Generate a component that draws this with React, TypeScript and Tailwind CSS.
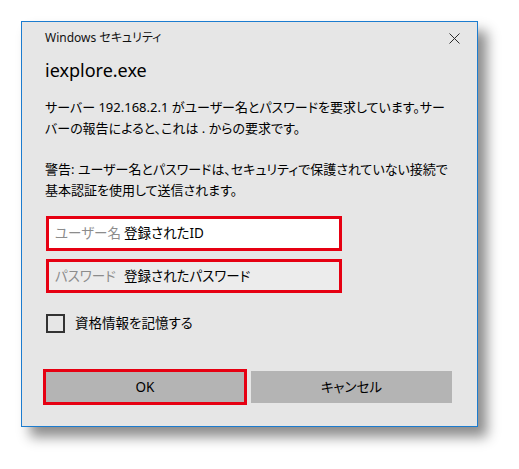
const font = "font-['Noto_Sans','Noto_Sans_CJK_JP',sans-serif] [font-feature-settings:'palt']"

const CloseIcon = () => (
	<svg width="11" height="11" viewBox="0 0 11 11" className="block">
		<path d="M0.5 0.5 L10.5 10.5 M10.5 0.5 L0.5 10.5" stroke="#2b2b2b" strokeWidth="1" fill="none" />
	</svg>
)

export default function App() {
	return (
		<div className={`min-h-[469px] w-[519px] bg-white pt-[21px] pl-[21px] ${font}`}>
			<div className="flex h-[406px] w-[457px] flex-col border border-[#1c7ccf] bg-[#e6e6e6] pl-[23px] text-black shadow-[9px_10px_12px_rgba(0,0,0,0.45)]">
				{/* title bar */}
				<div className="mt-[8px] flex h-[16px] items-center justify-between pr-[17px]">
					<div className="text-[12px] leading-[16px] text-[#111]">Windows セキュリティ</div>
					<CloseIcon />
				</div>

				<div className="mt-[11px] text-[18px] leading-[26px]">iexplore.exe</div>

				<div className="mt-[14px] text-[13px] leading-[21px]">
					サーバー 192.168.2.1 がユーザー名とパスワードを要求しています。サー
					<br />
					バーの報告によると、これは . からの要求です。
				</div>

				<div className="mt-[20px] text-[13px] leading-[21px]">
					警告: ユーザー名とパスワードは、セキュリティで保護されていない接続で
					<br />
					基本認証を使用して送信されます。
				</div>

				{/* credential fields */}
				<div className="mt-[15px] ml-px flex h-[35px] w-[296px] items-center border-[3px] border-[#e60012] bg-white pl-[6px] text-[13.5px]">
					<span className="w-[69px] text-[#8c8c8c]">ユーザー名</span>
					<span>登録されたID</span>
				</div>
				<div className="mt-[8px] ml-px flex h-[34px] w-[296px] items-center border-[3px] border-[#e60012] bg-[#ececec] pl-[6px] text-[13.5px]">
					<span className="w-[69px] text-[#8c8c8c]">パスワード</span>
					<span>登録されたパスワード</span>
				</div>

				<label className="mt-[20px] ml-px flex items-center gap-[10px] text-[13.5px]">
					<span className="h-[19px] w-[19px] border-2 border-[#333]" />
					<span>資格情報を記憶する</span>
				</label>

				{/* buttons */}
				<div className="mt-[36px] ml-[-2px] flex items-start gap-[4px] text-[13.5px]">
					<button className="flex h-[36px] w-[204px] items-center justify-center border-[3px] border-[#e60012] bg-[#b4b4b4]">
						OK
					</button>
					<button className="mt-[2px] flex h-[32px] w-[201px] items-center justify-center bg-[#b4b4b4]">
						キャンセル
					</button>
				</div>
			</div>
		</div>
	)
}
